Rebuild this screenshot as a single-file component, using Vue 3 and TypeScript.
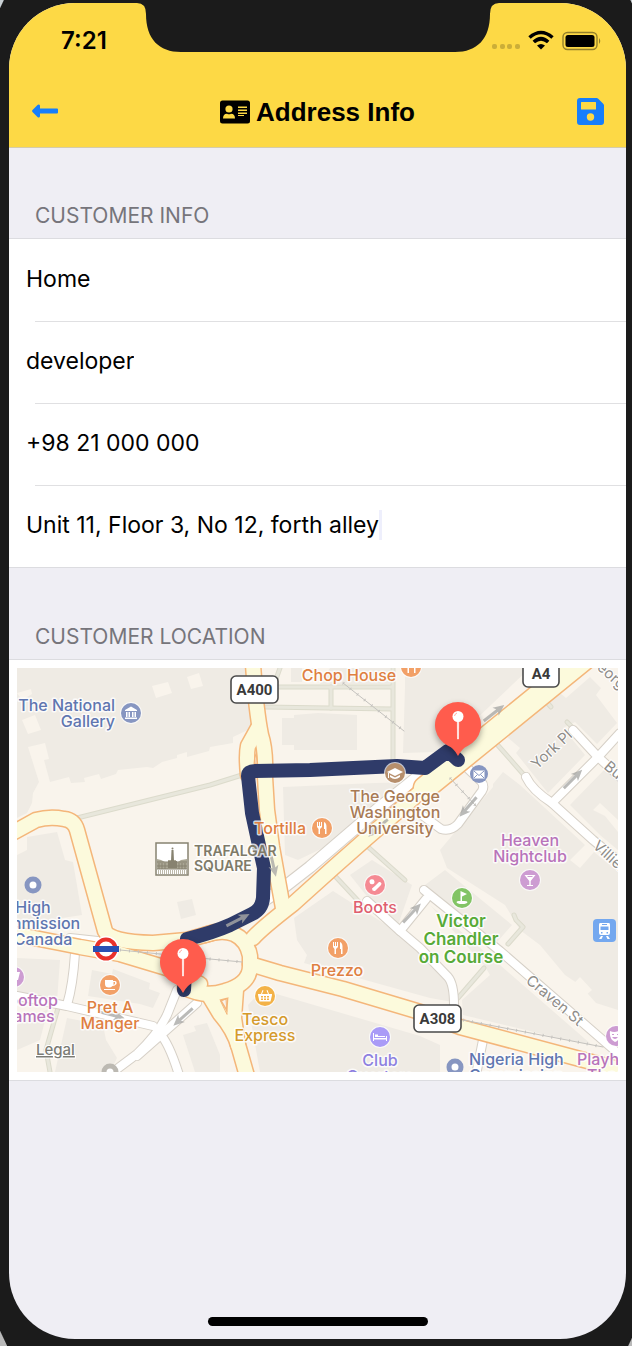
<script setup lang="ts">
import { ref } from 'vue'

interface Field {
  id: string
  label: string
  value: string
}

interface MapLabel {
  x: number
  y: number
  anchor: 'start' | 'middle' | 'end'
  tone: string
  lines: string[]
  leading?: number
}

interface Poi {
  x: number
  y: number
  fill: string
  glyph: string
}

const fields = ref<Field[]>([
  { id: 'title', label: 'Address title', value: 'Home' },
  { id: 'name', label: 'Customer name', value: 'developer' },
  { id: 'phone', label: 'Phone number', value: '+98 21 000 000' },
  { id: 'address', label: 'Address', value: 'Unit 11, Floor 3, No 12, forth alley' },
])
const activeField = ref<string>('address')

const buildings: string[] = [
  'M17 668H248L252 728L233 737V743L210 747L209 751L187 757V752L177 755V758L162 762L153 768L147 767L118 770L116 774L101 779L99 774L84 778L85 782L71 783L69 777L50 782L44 760L49 759L45 743L28 747L39 782L33 793L32 803L27 813L17 818Z',
  'M27 837L57 832L65 860L73 862L82 915L17 925V855L27 850Z',
  'M17 958L60 960L57 1001L17 995Z',
  'M92 970L112 974L113 969L150 983L149 989L160 993L153 1008L140 1004L88 996Z',
  'M17 1025L48 1009L40 1040L17 1050Z',
  'M67 1018L103 1025L106 1040L117 1058L110 1072H55Z',
  'M183 1035L196 1031L194 1026L207 1023L220 1055V1072H195Z',
  'M177 902L192 899L196 915L181 919Z',
  'M291 668H302V682H291ZM330 668H390V684H320Z',
  'M282 718H294V715L318 713L357 715V750H294V745H282Z',
  'M283 787L375 783L420 782L350 835L298 860L285 855Z',
  'M405 668H530L473 722L435 752L403 753L405 687Z',
  'M507 737L536 714L534 709L560 693L566 698L590 677L601 688L596 695L617 723L597 744L575 722L563 728L585 755L548 793L516 753L520 748Z',
  'M570 805L607 767L618 776V850L600 835Z',
  'M440 850L493 787V784L503 772L520 785L545 808L585 845L570 860L580 868L594 852L618 872V1010L596 1003L580 985L565 975L540 945L520 930L505 905L447 868Z',
  'M294 918L333 891L410 940L430 958L452 985L453 1002L430 998L304 963L307 955L297 940Z',
  'M350 875L372 860L412 885L398 925L370 900Z',
  'M273 993L420 1036L440 1045V1072H260L248 1005L262 990Z',
  'M430 905L500 965L592 1045L575 1042L463 1015L462 1000L490 975L484 965Z',
  'M425 885L445 870L512 925L497 942L485 935Z',
]
const clearings: string[] = [
  'M152 686L168 682L172 693L156 698Z',
  'M187 677L199 673L203 686L191 689Z',
  'M17 693L31 689L32 694L22 700Z',
  'M22 720L35 715L41 730L28 734Z',
  'M563 995L580 977L592 990L575 1004Z',
  'M593 810L600 803L618 820V832L605 816Z',
]
const paths: string[] = [
  'M77 818L210 785L242 775',
  'M278 687H392',
  'M265 707L392 709',
  'M331 687V708',
  'M393 668V765',
  'M280 668L275 682',
  'M495 742L524 775',
  'M543 698L551 707M567 722L573 728',
  'M335 876L362 905',
  'M367 846L405 880',
  'M484 968L458 998',
  'M514 915L516 920L523 927L508 944',
  'M58 1008L46 1050L50 1072',
]
const minorRoads: string[] = [
  'M462 763L481 781Q485 786 482 791L458 824Q450 832 441 829L422 815',
  'M573 730L598 757L620 777',
  'M620 733L598 757L552 803',
  'M526 777Q532 790 552 803L593 840L620 862',
  'M424 890L500 951L620 1055',
  'M367 901L400 931L420 948L448 977Q454 984 454 1005',
  'M400 931L426 899',
  'M75 953Q73 985 67 1005',
  'M17 996L67 1006L153 1026',
  'M177 990L167 1015Q158 1034 137 1054L113 1072',
  'M197 1003L162 1034L137 1056',
  'M160 1034Q169 1043 179 1075',
  'M483 1040L476 1075',
  'M70 938L107 942',
]
const wideRoads: string[] = ['M262 902L283 888L310 867L380 807L425 771']
const mainRoads: string[] = [
  'M14 832L36 820Q50 816 64 819Q74 820 77 830L105 931Q110 942 153 943L187 940L215 932',
  'M14 934L60 943L80 947L120 954L170 969L200 984',
  'M185 988Q205 998 225 991Q250 984 250 966V956Q247 940 234 934Q222 929 205 935',
  'M250 964L280 973L343 989L420 1012L460 1027L580 1059L622 1070',
  'M253 938Q262 928 293 904L333 868L367 838L425 788',
  'M253 664Q256 710 261 735Q266 750 265 777L267 810L272 847L277 875L283 908',
  'M258 728L248 746Q246 755 248 775',
  'M208 994L220 1014Q234 1030 239 1048L247 1076',
  'M236 990L234 1018L238 1045',
]
const rails: string[] = [
  'M343 683L404 731',
  'M450 778L476 806',
  'M120 950L210 959L242 962',
  'M463 1020L603 1047',
]
const arrows: { x: number; y: number; turn: number }[] = [
  { x: 494, y: 713, turn: -38 },
  { x: 573, y: 779, turn: -45 },
  { x: 468, y: 807, turn: 131 },
  { x: 412, y: 913, turn: -47 },
  { x: 238, y: 920, turn: -27 },
  { x: 273, y: 864, turn: 77 },
  { x: 183, y: 1017, turn: 138 },
  { x: 112, y: 1015, turn: 14 },
  { x: 378, y: 828, turn: 138 },
]

const pois: Poi[] = [
  { x: 131, y: 713, fill: '#8796c1', glyph: 'M-6 -3L0 -6.500L6 -3V-2H-6ZM-5 -1H-3.500V4H-5ZM-2.500 -1H-1V4H-2.500ZM1 -1H2.500V4H1ZM3.500 -1H5V4H3.500ZM-6 4.500H6V6H-6Z' },
  { x: 411, y: 667, fill: '#f2a067', glyph: 'M-5 -6H-4V-2H-3V-6H-2V-2H-1V-6H0V-1L-2 1V6H-3.500V1L-5 -1ZM2 -6Q5 -5 4.500 1V6H3V1H2Z' },
  { x: 322, y: 828, fill: '#f2a067', glyph: 'M-5 -6H-4V-2H-3V-6H-2V-2H-1V-6H0V-1L-2 1V6H-3.500V1L-5 -1ZM2 -6Q5 -5 4.500 1V6H3V1H2Z' },
  { x: 338, y: 948, fill: '#f2a067', glyph: 'M-5 -6H-4V-2H-3V-6H-2V-2H-1V-6H0V-1L-2 1V6H-3.500V1L-5 -1ZM2 -6Q5 -5 4.500 1V6H3V1H2Z' },
  { x: 395, y: 773, fill: '#b78f6c', glyph: 'M-8 -1L0 -5L8 -1L0 3ZM-5 2L0 4.500L5 2V4Q0 8 -5 4ZM-7 0H-6V5H-7Z' },
  { x: 375, y: 885, fill: '#f58a93', glyph: 'M-5.500 -3A2.500 2.500 0 1 1 -0.500 -3.500A2.500 2.500 0 1 1 -5.500 -3ZM0 1L4 -3Q6 -3.500 6.500 -1.500L6 0L0 6Q-3 6.500 -3 3.500Z' },
  { x: 462, y: 898, fill: '#82c465', glyph: 'M-1.500 -7L5 -4L0 -1.500V3Q5 2.500 5.500 4Q5 6 0 6Q-5 6 -5.500 4Q-5 2.500 -1.500 3Z' },
  { x: 530, y: 880, fill: '#cd9cd2', glyph: 'M-5.500 -5H5.500L0.700 1V5H3V6H-3V5H-0.700V1ZM-3 -4L-2 -3H2L3 -4Z' },
  { x: 110, y: 985, fill: '#f2a067', glyph: 'M-5 -5H3V-4H5Q7 -4 6.500 -1Q5 1 2.500 1Q1 2.500 -1 2.500Q-5 2.500 -5 -1ZM3.500 -3V0Q5.500 -0.500 5 -3ZM-6 4H5V5H-6Z' },
  { x: 265, y: 996, fill: '#f3b247', glyph: 'M-7 -2H-4L-2.500 -6L-1.500 -5.500L-3 -2H3L1.500 -5.500L2.500 -6L4 -2H7V-1L5.500 5.500H-5.500L-7 -1ZM-4 0V1.500H-2V0ZM-1 0V1.500H1V0ZM2 0V1.500H4V0ZM-4 2.500V4H-2V2.500ZM-1 2.500V4H1V2.500ZM2 2.500V4H4V2.500Z' },
  { x: 380, y: 1037, fill: '#a99bf7', glyph: 'M-7 -4H-6V1H6V-1H7V4H6V2.500H-6V4H-7ZM-5 -2.500H-2V-1H5V0H-5Z' },
  { x: 14, y: 977, fill: '#cd9cd2', glyph: 'M0 -5L6 -5L4 3H1Z' },
  { x: 616, y: 1036, fill: '#cd9cd2', glyph: 'M-6 -5Q-2 -3 3 -5Q5 4 -1 6Q-7 3 -6 -5ZM-4 -2V-1H-2V-2ZM1 -2V-1H2V-2ZM-4 1Q-1 5 2 1Z' },
]

const labels: MapLabel[] = [
  { x: 115, y: 711, anchor: 'end', tone: 'blue', lines: ['The National', 'Gallery'] },
  { x: 349, y: 681, anchor: 'middle', tone: 'orange', lines: ['Chop House'] },
  { x: 280, y: 834, anchor: 'middle', tone: 'orange', lines: ['Tortilla'] },
  { x: 395, y: 802, anchor: 'middle', tone: 'brown', lines: ['The George', 'Washington', 'University'] },
  { x: 530, y: 846, anchor: 'middle', tone: 'violet', lines: ['Heaven', 'Nightclub'] },
  { x: 33, y: 913, anchor: 'middle', tone: 'blue', lines: ['High', 'Commission', 'of Canada'] },
  { x: 28, y: 1006, anchor: 'middle', tone: 'violet', lines: ['Rooftop', 'Games'] },
  { x: 110, y: 1013, anchor: 'middle', tone: 'orange', lines: ['Pret A', 'Manger'] },
  { x: 265, y: 1025, anchor: 'middle', tone: 'gold', lines: ['Tesco', 'Express'] },
  { x: 337, y: 976, anchor: 'middle', tone: 'orange', lines: ['Prezzo'] },
  { x: 375, y: 913, anchor: 'middle', tone: 'rose', lines: ['Boots'] },
  { x: 380, y: 1066, anchor: 'middle', tone: 'purple', lines: ['Club', 'Quarters'] },
  { x: 461, y: 927, anchor: 'middle', tone: 'green', lines: ['Victor', 'Chandler', 'on Course'], leading: 18 },
  { x: 469, y: 1065, anchor: 'start', tone: 'blue', lines: ['Nigeria High', 'Commission'] },
  { x: 577, y: 1065, anchor: 'start', tone: 'violet', lines: ['Playhouse'] },
  { x: 587, y: 1081, anchor: 'start', tone: 'violet', lines: ['Theatre'] },
  { x: 194, y: 856, anchor: 'start', tone: 'stone', lines: ['TRAFALGAR', 'SQUARE'], leading: 15 },
]
const streets: { x: number; y: number; turn: number; name: string }[] = [
  { x: 537, y: 770, turn: -43, name: 'York Pl' },
  { x: 525, y: 982, turn: 40, name: 'Craven St' },
  { x: 588, y: 661, turn: 42, name: 'George Ct' },
  { x: 603, y: 768, turn: 40, name: 'Buckingham St' },
  { x: 592, y: 847, turn: 42, name: 'Villiers St' },
]
const shields: { x: number; y: number; w: number; name: string }[] = [
  { x: 231, y: 676, w: 47, name: 'A400' },
  { x: 523, y: 660, w: 36, name: 'A4' },
  { x: 414, y: 1005, w: 47, name: 'A308' },
]
const pins: { x: number; y: number }[] = [
  { x: 458, y: 725 },
  { x: 183, y: 962 },
]
</script>

<template>
  <div class="device">
    <main class="screen">
      <header class="top">
        <svg class="notch" viewBox="0 0 362 50" aria-hidden="true">
          <path d="M0 0Q9 0 9 11C9 36 22 49 44 49H318C340 49 353 36 353 11Q353 0 362 0Z" fill="#1b1b1b" />
        </svg>
        <div class="status">
          <span class="clock">7:21</span>
          <svg class="signals" viewBox="0 0 112 24" aria-hidden="true">
            <g fill="#cbae38">
              <rect x="1" y="15" width="5" height="5" rx="2" />
              <rect x="9" y="15" width="5" height="5" rx="2" />
              <rect x="16" y="15" width="5" height="5" rx="2" />
              <rect x="24" y="15" width="5" height="5" rx="2" />
            </g>
            <g fill="none" stroke="#000" stroke-width="3.600">
              <path d="M38.500 8.500Q50 -1.500 61.500 8.500" />
              <path d="M42.800 13Q50 6.500 57.200 13" />
            </g>
            <path d="M46 16.500Q50 13.500 54 16.500L50 20.500Z" />
            <rect x="72" y="3.500" width="34" height="17" rx="4.500" fill="none" stroke="#93802c" stroke-width="1.400" />
            <rect x="74.500" y="6" width="29" height="12" rx="2.500" />
            <path d="M108 9Q110.500 12 108 15Z" fill="#93802c" />
          </svg>
        </div>
        <nav class="bar">
          <button class="icon-button" type="button" aria-label="Back">
            <svg width="26" height="14" viewBox="0 0 26 14"><path d="M7 0.500Q8 0.800 8 2V4.500H25Q26 4.500 26 5.500V8.500Q26 9.500 25 9.500H8V12Q8 13.200 7 13.500Q6 13.500 5.500 13L0.500 8Q-0.300 7 0.500 6L5.500 1Q6.200 0.300 7 0.500Z" fill="#167efb" /></svg>
          </button>
          <h1 class="title">
            <svg width="30" height="24" viewBox="0 0 30 24" aria-hidden="true">
              <rect y="0.500" width="30" height="23" rx="2.500" />
              <g fill="#fdd945">
                <circle cx="9" cy="9" r="3.600" />
                <path d="M3 18.500Q3 13.800 7 13.800Q9 14.800 11 13.800Q15 13.800 15 18.500Z" />
                <path d="M18 6.500H27V8H18ZM18 9.500H27V11H18ZM18 12.500H27V14H18ZM18 15H24V16H18Z" />
              </g>
            </svg>
            <span>Address Info</span>
          </h1>
          <button class="icon-button" type="button" aria-label="Save">
            <svg width="27" height="27" viewBox="0 0 27 27"><path fill-rule="evenodd" d="M3 0H19.500Q20.500 0 21.500 1L26 5.500Q27 6.500 27 7.500V24Q27 27 24 27H3Q0 27 0 24V3Q0 0 3 0ZM4.500 4Q4 4 4 4.500V11Q4 11.500 4.500 11.500H18.500Q19 11.500 19 11V4.500Q19 4 18.500 4ZM13.500 15.300A3.700 3.700 0 1 0 13.500 22.700A3.700 3.700 0 1 0 13.500 15.300Z" fill="#167efb" /></svg>
          </button>
        </nav>
      </header>

      <form @submit.prevent>
        <h2 class="caption">CUSTOMER INFO</h2>
        <div class="group">
          <div v-for="field in fields" :key="field.id" class="row">
            <input
              :id="field.id"
              v-model="field.value"
              class="input"
              type="text"
              :aria-label="field.label"
              @focus="activeField = field.id"
            />
            <span v-if="field.id === activeField" class="caret"></span>
          </div>
        </div>
      </form>

      <section class="location">
        <h2 class="caption">CUSTOMER LOCATION</h2>
        <div class="group map-cell">
          <svg class="map" viewBox="17 668 601 404" role="img" aria-label="Route on the map">
            <rect x="17" y="668" width="601" height="404" fill="#f9f4ec" />
            <path v-for="d in buildings" :key="d" :d="d" fill="#efebe4" />
            <path v-for="d in clearings" :key="d" :d="d" fill="#f9f4ec" />
            <g class="lines">
              <path v-for="d in paths" :key="'e' + d" :d="d" stroke="#dcdbcc" stroke-width="5" />
              <path v-for="d in paths" :key="'f' + d" :d="d" stroke="#e8e7dc" stroke-width="3" />
              <path v-for="d in minorRoads" :key="'e' + d" :d="d" stroke="#d6d0c7" stroke-width="10" />
              <path v-for="d in wideRoads" :key="'e' + d" :d="d" stroke="#d6d0c7" stroke-width="13" />
              <path v-for="d in minorRoads" :key="'f' + d" :d="d" stroke="#fff" stroke-width="8" />
              <path v-for="d in wideRoads" :key="'f' + d" :d="d" stroke="#fff" stroke-width="11" />
              <path v-for="d in mainRoads" :key="'e' + d" :d="d" stroke="#f4b67a" stroke-width="17" />
              <path d="M425 788L462 758L590 654" stroke="#f4b67a" stroke-width="25" />
              <path v-for="d in mainRoads" :key="'f' + d" :d="d" stroke="#fcfadc" stroke-width="14" />
              <path d="M425 788L462 758L590 654" stroke="#fcfadc" stroke-width="22" />
              <path d="M17 920V930L52 935Z" fill="#f9f4ec" />
              <path d="M221 1001L226 999L227 1014Z" fill="#f9f4ec" stroke="#f4b67a" />
              <path d="M256 754Q254 758 254 764L257 764Z" fill="#f9f4ec" stroke="#f4b67a" />
              <path v-for="d in rails" :key="d" :d="d" stroke="#c4c2be" stroke-width="1" />
              <path v-for="d in rails" :key="'t' + d" :d="d" stroke="#c4c2be" stroke-width="3" stroke-dasharray="1 8" class="ticks" />
              <path
                d="M184 990L187 939Q212 933 230 925L252 914Q262 909 263 898L264 868L260 850L252 813L248 776Q248 771 255 771L310 770L397 766L425 768L448 751L458 760"
                stroke="#2f3b69"
                stroke-width="14"
              />
            </g>
            <path
              v-for="arrow in arrows"
              :key="arrow.x"
              :transform="`translate(${arrow.x} ${arrow.y}) rotate(${arrow.turn})`"
              d="M-13 -1.500H4L2 -5L13 0L2 5L4 1.500H-13Z"
              fill="#a9a9a6"
              fill-opacity="0.800"
            />

            <g class="street">
              <text
                v-for="street in streets"
                :key="street.name"
                :transform="`translate(${street.x} ${street.y}) rotate(${street.turn})`"
              >{{ street.name }}</text>
            </g>

            <g v-for="poi in pois" :key="poi.x + poi.fill" :transform="`translate(${poi.x} ${poi.y})`">
              <circle r="11" fill="#fff" fill-opacity="0.700" />
              <circle r="10" :fill="poi.fill" />
              <path :d="poi.glyph" fill="#fff" fill-rule="evenodd" />
            </g>

            <!-- Post office -->
            <circle cx="479" cy="774" r="9" fill="#8796c1" />
            <rect x="473.500" y="770.500" width="11" height="8" fill="#fff" />
            <path d="M474 771L479 775.500L484 771M474 778L477.500 774.500M484 778L480.500 774.500" fill="none" stroke="#8796c1" />
            <!-- Plain place markers -->
            <g fill="#fff" stroke-width="5">
              <circle cx="33" cy="885" r="6" stroke="#8796c1" />
              <circle cx="455" cy="1067" r="6" stroke="#8796c1" />
              <circle cx="110" cy="1072" r="6" stroke="#bcb9b2" />
            </g>
            <!-- Underground roundel -->
            <circle cx="106" cy="949" r="13" fill="#fff" />
            <circle cx="106" cy="949" r="9.500" fill="#fff" stroke="#e9322b" stroke-width="4" />
            <rect x="93" y="946" width="26" height="6" fill="#2950b4" />
            <!-- Rail station -->
            <rect x="593" y="919" width="23" height="23" rx="4" fill="#74a8ef" />
            <path fill="#fff" fill-rule="evenodd" d="M600 923H609Q610 923 610 925V933Q610 935 608 935H601Q599 935 599 933V925Q599 923 600 923ZM602 924V925H607V924ZM600.500 926.500V930H608.500V926.500ZM601 932V933.500H602.500V932ZM606.500 932V933.500H608V932ZM601 936H603L601.500 939H599ZM606 936H608L610 939H607.500Z" />
            <!-- Square with column -->
            <rect x="156" y="843" width="32" height="32" fill="#fff" stroke="#878270" stroke-width="1.500" />
            <path d="M157 859L161 860L165 862H168V860H176V862H178L181 860L187 859V869H157Z" fill="#aaa694" />
            <path d="M157 862H168M176 862H187M157 866H187M157 869H187M159 863V869M162 863V869M165 863V869M179 863V869M182 863V869M185 863V869" stroke="#878270" />
            <path d="M171.500 850H173.500L174 861H177V868H168V861H171Z" fill="#878270" />
            <circle cx="172.500" cy="848.500" r="1" fill="#878270" />
            <path d="M158 872H187" stroke="#bdb9aa" stroke-width="4" stroke-dasharray="1 1" />

            <text v-for="label in labels" :key="label.lines[0]" :class="['place', label.tone]" :text-anchor="label.anchor">
              <tspan
                v-for="(line, i) in label.lines"
                :key="line"
                :x="label.x"
                :y="label.y + i * (label.leading ?? 16)"
              >{{ line }}</tspan>
            </text>

            <g v-for="shield in shields" :key="shield.name">
              <rect :x="shield.x" :y="shield.y" :width="shield.w" height="27" rx="5" fill="#fff" stroke="#4a4a4a" stroke-width="1.600" />
              <text class="shield" text-anchor="middle" :x="shield.x + shield.w / 2" :y="shield.y + 19">{{ shield.name }}</text>
            </g>

            <a href="#legal"><text class="legal" x="36" y="1055">Legal</text></a>

            <g v-for="pin in pins" :key="pin.x" class="pin" :transform="`translate(${pin.x} ${pin.y})`">
              <path d="M0 31Q-4 23 -10 20.700A23 23 0 1 1 10 20.700Q4 23 0 31Z" fill="#ff5c4d" />
              <path d="M-0.700 -8H0.700L0.500 14H-0.500Z" fill="#fff" stroke="#fff" stroke-width="0.600" />
              <circle cy="-8.500" r="5.500" fill="#fff" />
              <path d="M-3.500 -9Q-3 -11.500 -1 -12" fill="none" stroke="#ffaca4" />
            </g>
          </svg>
        </div>
      </section>

      <div class="home-bar"></div>
    </main>
  </div>
</template>

<style>
body {
  margin: 0;
}
</style>

<style scoped>
.device {
  box-sizing: border-box;
  display: flex;
  min-height: 100vh;
  padding: 3px 6px 7px 9px;
  background:
    linear-gradient(to bottom right, #c9d0d4 3px, transparent 4px),
    linear-gradient(to bottom left, #c9d0d4 1px, transparent 2px),
    linear-gradient(to top right, #b9b9b9 6px, transparent 7px),
    linear-gradient(to top left, #b9b9b9 3px, transparent 4px),
    #1b1b1b;
}
.screen {
  position: relative;
  display: flex;
  flex: 1;
  flex-direction: column;
  min-width: 0;
  overflow: hidden;
  border-radius: 66px;
  background: #efeef4;
  color: #000;
  font-family: Inter, "Liberation Sans", sans-serif;
}
.top {
  border-bottom: 1px solid #d5ccaa;
  background: #fdd945;
}
.notch {
  position: absolute;
  top: 0;
  left: 50%;
  width: 362px;
  height: 50px;
  transform: translateX(-50%);
}
.status {
  box-sizing: border-box;
  display: flex;
  align-items: center;
  justify-content: space-between;
  height: 72px;
  padding: 4px 23px 0 52px;
}
.clock {
  font-size: 24px;
  font-weight: 600;
  line-height: 32px;
}
.signals {
  width: 112px;
  height: 24px;
}
.bar {
  display: grid;
  grid-template-columns: 40px 1fr 40px;
  align-items: center;
  height: 72px;
  padding: 0 16px;
}
.icon-button {
  display: flex;
  align-items: center;
  justify-content: center;
  height: 40px;
  padding: 0;
  border: 0;
  background: none;
}
.title {
  display: flex;
  align-items: center;
  justify-content: center;
  gap: 6px;
  margin: 0;
  padding-top: 2px;
  font: bold 26px/32px "Liberation Sans", Arial, sans-serif;
}
.caption {
  margin: 0;
  padding: 54px 26px 9px;
  color: #76757b;
  font-size: 21px;
  font-weight: 400;
  line-height: 28px;
}
.location {
  padding-top: 1px;
}
.group {
  margin-top: -1px;
  border-top: 1px solid #dcdce0;
  border-bottom: 1px solid #dcdce0;
  background: #fff;
}
.row {
  position: relative;
  display: flex;
  align-items: center;
  height: 82px;
  padding: 0 17px 2px;
  box-sizing: border-box;
}
.row + .row::before {
  position: absolute;
  top: 0;
  right: 0;
  left: 26px;
  height: 1px;
  background: #e0e0e2;
  content: "";
}
.input {
  field-sizing: content;
  min-width: 40px;
  max-width: 100%;
  padding: 0;
  border: 0;
  outline: 0;
  background: none;
  color: #000;
  font: 400 23px/30px Inter, "Liberation Sans", sans-serif;
}
.caret {
  flex: none;
  width: 3px;
  height: 30px;
  background: #eeeffc;
}
.map-cell {
  padding: 8px;
}
.map {
  display: block;
  width: 100%;
  height: auto;
}
.lines path {
  fill: none;
  stroke-linecap: round;
  stroke-linejoin: round;
}
.lines .ticks {
  stroke-linecap: butt;
}
.place {
  font-size: 16px;
  font-weight: 500;
  paint-order: stroke;
  stroke: #fff;
  stroke-opacity: 0.8;
  stroke-width: 3px;
  stroke-linejoin: round;
}
.blue { fill: #5f76b0; }
.orange { fill: #df7f41; }
.brown { fill: #a87a54; }
.violet { fill: #b873ba; }
.gold { fill: #d59a2c; }
.rose { fill: #df5f70; }
.purple { fill: #8d80e0; }
.green { fill: #57aa37; font-size: 17px; font-weight: 600; }
.stone { fill: #7e7a68; font-size: 14px; font-weight: 600; }
.street {
  fill: #8f8d89;
  font-size: 15px;
  font-weight: 400;
}
.street text {
  paint-order: stroke;
  stroke: #fff;
  stroke-width: 2px;
}
.shield {
  fill: #3a3a3a;
  font: bold 15px Roboto, "Liberation Sans", sans-serif;
}
.legal {
  fill: #7b7b74;
  font-size: 15px;
  font-weight: 500;
  text-decoration: underline;
  paint-order: stroke;
  stroke: #fff;
  stroke-width: 2px;
}
.pin {
  filter: drop-shadow(0 3px 3px rgba(0, 0, 0, 0.35));
}
.home-bar {
  align-self: center;
  width: 220px;
  height: 9px;
  margin: auto 0 13px;
  border-radius: 5px;
  background: #000;
}
</style>
